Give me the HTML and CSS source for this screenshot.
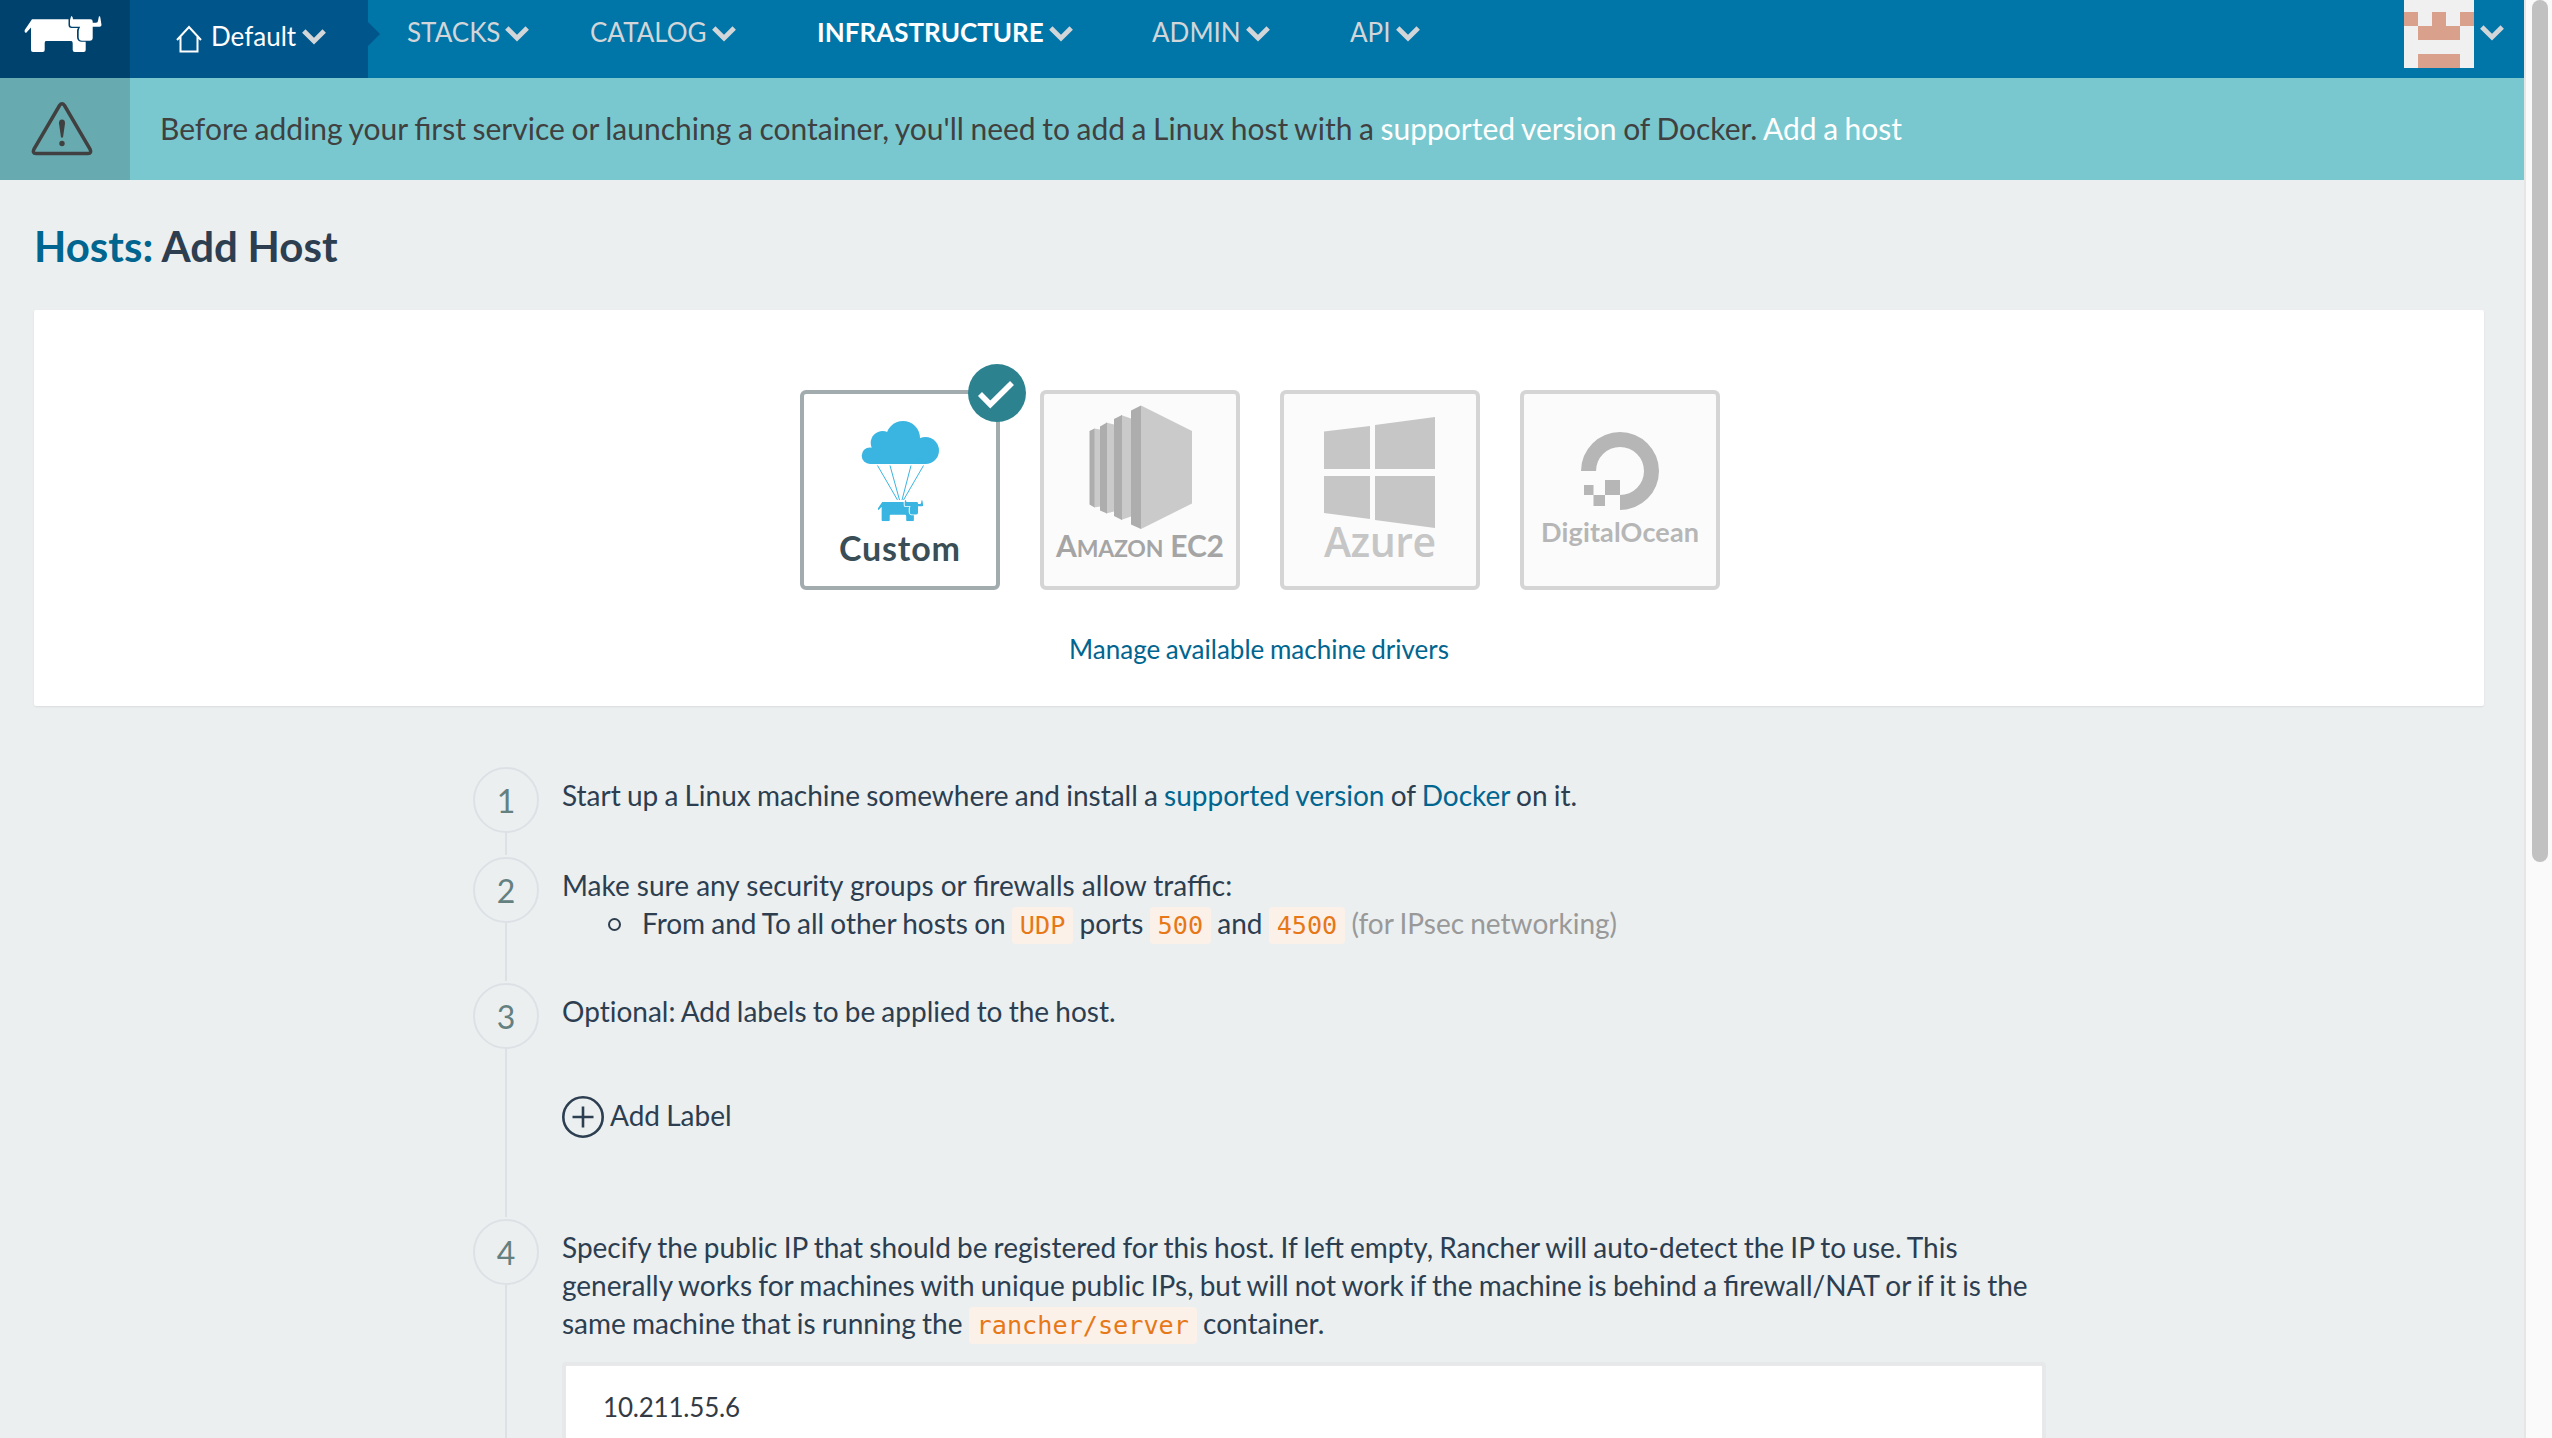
FILE: index.html
```html
<!DOCTYPE html>
<html lang="en">
<head>
<meta charset="utf-8">
<title>Add Host</title>
<link rel="stylesheet" href="styles.css">
</head>
<body>
<svg class="defs" width="0" height="0">
  <symbol id="chevron" viewBox="0 0 24 16"><path d="M1.800 2 12 12.200 22.200 2" fill="none" stroke="currentColor" stroke-width="4.800"/></symbol>
  <symbol id="cow" viewBox="0 0 78 36">
    <path d="M8 3.300H44.500V9q0 3 3 3H54q-1 1-1 3v6q0 4 4 4.700h4.700V34q0 2-2 2h-9q-2 0-2-2v-6q0-3-1.500-3H22q-1.300 0-1.300 2v7q0 2-2 2H9q-2 0-2-2V11.500L2 17Q0 16.500.7 14z" fill="currentColor"/>
    <path d="M47.200 0Q49 .3 49 3.300H66.500q2.200 0 2.200 2.200v1.200H72q2 0 2-2L75 0q1.500.3 1.500 2.500L77.500 9q0 1.700-2 1.700h-6.800v11q0 3-3 3H58q-3 0-3.300-3V15q0-2 1.500-4.300H48q-2 0-2-2V4z" fill="currentColor"/>
  </symbol>
</svg>
<div class="app">
  <div class="page">
    <header class="header">
      <a class="logo"><svg width="78" height="36"><use href="#cow"/></svg></a>
      <a class="env">
        <svg class="home" width="26" height="28" viewBox="0 0 26 28"><path d="M1 15 13 2l12 13M4.500 12v14.500h17V12" fill="none" stroke="currentColor" stroke-width="2"/></svg>
        <span>Default</span><svg class="chev" width="24" height="16"><use href="#chevron"/></svg>
      </a>
      <nav class="nav">
        <a class="nav-item stacks">STACKS<svg class="chev" width="24" height="16"><use href="#chevron"/></svg></a>
        <a class="nav-item catalog">CATALOG<svg class="chev" width="24" height="16"><use href="#chevron"/></svg></a>
        <a class="nav-item infra"><b>INFRASTRUCTURE</b><svg class="chev" width="24" height="16"><use href="#chevron"/></svg></a>
        <a class="nav-item admin">ADMIN<svg class="chev" width="24" height="16"><use href="#chevron"/></svg></a>
        <a class="nav-item api">API<svg class="chev" width="24" height="16"><use href="#chevron"/></svg></a>
      </nav>
      <a class="user">
        <svg width="70" height="68" viewBox="0 0 70 68" shape-rendering="crispEdges"><path d="M0 0h70v68H0z" fill="#f0f0f0"/><path d="M0 12h14v14H0zM28 12h14v14H28zM56 12h14v14H56zM14 26h42v14H14zM14 54h42v14H14z" fill="#d9a08c"/></svg>
        <svg class="chev" width="24" height="16"><use href="#chevron"/></svg>
      </a>
    </header>
    <section class="alert">
      <div class="alert-icon"><svg width="62" height="54" viewBox="0 0 62 54"><path d="M28.500 3.500q2.500-3.500 5 0L59 47q2 4.500-2 4.500H5q-4 0-2-4.500z" fill="none" stroke="#404040" stroke-width="3.500"/><path d="M31 17.500q3.200 0 3 4L32 35.500h-2L28 21.500q-.2-4 3-4z" fill="#404040"/><circle cx="31" cy="41.500" r="2.700" fill="#404040"/></svg></div>
      <p class="alert-text">Before adding your first service or launching a container, you'll need to add a Linux host with a <a>supported version</a> of Docker. <a>Add a host</a></p>
    </section>
    <main class="content">
      <h1 class="title"><a>Hosts:</a> Add Host</h1>
      <section class="panel">
        <div class="drivers">
          <div class="driver selected">
            <svg width="192" height="192" viewBox="0 0 192 192">
              <g fill="#3ab5e1">
                <circle cx="66" cy="61.700" r="8.300"/><circle cx="78.700" cy="49" r="12"/><circle cx="99" cy="44" r="17"/><circle cx="121.500" cy="56.500" r="13.500"/><path d="M66 70V55l13-8h34l9 10v13z"/>
              </g>
              <path d="M73.500 71.500 93.500 106M86 71.500 95.500 106M107 71.500 98 106M119.500 71.500 99.500 106" stroke="#3ab5e1" fill="none"/>
              <g color="#3ab5e1"><use href="#cow" x="73.500" y="106" width="46" height="21.200"/></g>
              <text class="label-custom" x="35" y="167" textLength="121">Custom</text>
            </svg>
            <svg class="check" width="58" height="58" viewBox="0 0 58 58"><circle cx="29" cy="29" r="29" fill="#2c838f"/><path d="M12 30 22.300 40.500 44 19" fill="none" stroke="#fff" stroke-width="5.600"/></svg>
          </div>
          <div class="driver">
            <svg width="192" height="192" viewBox="0 0 192 192">
              <path d="M50 34.500l6 1v77l-6 1zM62 28.500l8 2v87l-8 2zM77 21l10 3.500v98L77 126zM97 11.500 148 37v72.500L97 135z" fill="#cacaca"/>
              <path d="M45.500 37l5-2.500v79l-5-3zM56 32.500l7-4v91l-7-3zM70 25l8-4v105l-8-4zM87 16.500l10-5V135l-10-4.500z" fill="#adadad"/>
              <text class="label-ec2" x="12" y="163" textLength="168">A<tspan class="small-cap">MAZON</tspan> EC2</text>
            </svg>
          </div>
          <div class="driver">
            <svg width="192" height="192" viewBox="0 0 192 192">
              <path d="M40 37.500 86 32v43H40zM91 31l60-8v52H91zM40 82h46v43l-46-6zM91 82h60v52l-60-8z" fill="#c6c6c6"/>
              <text class="label-azure" x="40" y="163" textLength="112">Azure</text>
            </svg>
          </div>
          <div class="driver">
            <svg width="192" height="192" viewBox="0 0 192 192">
              <path d="M57 77a39 39 0 1 1 39 39v-15a24 24 0 1 0-24-24zM81 86h15v15H81zM69.500 101H81v11H69.500zM60 91h9.500v10H60z" fill="#b6b6b6"/>
              <text class="label-do" x="17" y="148" textLength="158">DigitalOcean</text>
            </svg>
          </div>
        </div>
        <a class="manage">Manage available machine drivers</a>
      </section>
      <ol class="steps">
        <li class="step s1"><span class="num">1</span><div class="body">Start up a Linux machine somewhere and install a <a>supported version</a> of <a>Docker</a> on it.</div></li>
        <li class="step s2"><span class="num">2</span><div class="body"><span class="wide">Make sure any security groups or firewalls allow traffic:</span>
          <div class="bullet"><i class="dot"></i><span>From and To all other hosts on <code>UDP</code> ports <code>500</code> and <code>4500</code> <span class="muted">(for IPsec networking)</span></span></div></div></li>
        <li class="step s3"><span class="num">3</span><div class="body">Optional: Add labels to be applied to the host.
          <a class="add"><svg width="42" height="42" viewBox="0 0 42 42"><circle cx="21" cy="21" r="19.700" fill="none" stroke="currentColor" stroke-width="2.600"/><path d="M21 10.500v21M10.500 21h21" stroke="currentColor" stroke-width="2.600"/></svg><span>Add Label</span></a></div></li>
        <li class="step s4"><span class="num">4</span><div class="body">Specify the public IP that should be registered for this host. If left empty, Rancher will auto-detect the IP to use. This<br>generally works for machines with unique public IPs, but will not work if the machine is behind a firewall/NAT or if it is the<br>same machine that is running the <code>rancher/server</code> container.
          <div class="input">10.211.55.6</div></div></li>
      </ol>
    </main>
  </div>
  <div class="scrollbar"><div class="thumb"></div></div>
</div>
</body>
</html>
```
FILE: styles.css
```css
* { box-sizing: border-box; }
body { margin: 0; font-family: Lato, "Liberation Sans", sans-serif; font-size: 28px; line-height: 38px; color: #2c3e50; background: #ebeff0; }
.defs { position: absolute; }
svg { display: block; flex: none; }
a { color: #00658f; text-decoration: none; }
.app { display: flex; height: 1438px; overflow: hidden; }
.page { width: 2524px; flex: none; }
.header { display: flex; height: 78px; background: #0075a8; color: #d3d6d8; }
.header a { color: inherit; }
.header .logo { width: 130px; background: #00426e; padding: 16px 0 0 24px; color: #fff; }
.header .env { position: relative; width: 238px; background: #00558b; color: #fff; display: flex; padding: 17px 0 0 46px; font-size: 26px; }
.env::after { content: ""; position: absolute; left: 238px; top: 22px; border: 12px solid transparent; border-left-color: #00558b; border-right: 0; }
.home { margin: 8px 9px 0 0; }
.env .chev { margin: 12px 0 0 6px; color: #d3d6d8; }
.nav { display: flex; flex: 1; padding-top: 13px; font-size: 26px; }
.nav-item { display: flex; }
.nav-item .chev { margin: 13px 0 0 5px; }
.nav b { color: #fff; }
.stacks { width: 183px; margin-left: 39px; }
.catalog { width: 227px; }
.infra { width: 335px; }
.admin { width: 198px; }
.user { display: flex; width: 120px; }
.user .chev { margin: 25px 0 0 6px; }
.alert { display: flex; height: 102px; background: #79c8cf; }
.alert-icon { width: 130px; background: #67aab0; padding: 24px 0 0 31px; }
.alert-text { margin: 0; padding: 31px 0 0 30px; font-size: 30px; word-spacing: -1.1px; color: #404040; white-space: nowrap; }
.alert-text a { color: #fff; }
.content { padding: 0 40px 0 34px; }
.title { margin: 0; padding-top: 41px; height: 130px; font-size: 42px; line-height: 50px; font-weight: 700; word-spacing: -.5px; }
.panel { height: 396px; background: #fff; border-radius: 2px; box-shadow: 0 1px 2px rgba(0,0,0,.08); display: flex; flex-direction: column; align-items: center; }
.drivers { display: flex; gap: 40px; padding: 80px 0 0 2px; }
.driver { position: relative; width: 200px; height: 200px; border: 4px solid #d5d5d5; border-radius: 6px; background: #fbfbfb; }
.driver.selected { border-color: #a2acaf; background: #fff; }
.check { position: absolute; left: 164px; top: -30px; }
text { font-family: Lato, sans-serif; font-weight: 700; }
.label-custom { font-size: 34px; fill: #3a4e57; }
.label-ec2 { font-size: 30px; fill: #a5a5a5; }
.small-cap { font-size: 23px; }
.label-azure { font-family: "Open Sans", sans-serif; font-weight: 600; font-size: 41px; fill: #c6c6c6; }
.label-do { font-size: 27px; fill: #b6b6b6; }
.manage { margin-top: 40px; font-size: 26px; word-spacing: -1px; }
.steps { list-style: none; margin: 0; padding: 60px 0 0 439px; }
.step { display: flex; position: relative; }
.step::before { content: ""; position: absolute; left: 32px; top: 67px; bottom: 1px; width: 2px; background: #dde1e6; }
.num { width: 66px; height: 66px; margin-top: 1px; flex: none; border: 2px solid #dde1e6; border-radius: 50%; text-align: center; font-size: 32px; line-height: 64px; color: #64807f; }
.body { padding: 10px 0 0 23px; white-space: nowrap; word-spacing: -1px; }
.wide { word-spacing: 0; }
.s1 { height: 90px; }
.s2 { height: 126px; }
.s3 { height: 236px; font-variant-ligatures: none; }
.s4 { height: 400px; }
.bullet { display: flex; padding-left: 46px; }
.dot { width: 13px; height: 13px; margin: 14px 21px 0 0; border: 2px solid #2c3e50; border-radius: 50%; }
code { font-family: "DejaVu Sans Mono", monospace; font-size: 25.2px; line-height: 30px; color: #e67817; background: #fcf1e9; padding: 4px 8px; border-radius: 4px; }
.muted { color: #999; }
.add { display: flex; color: #2c3e50; padding-top: 66px; gap: 6px; }
.input { width: 1484px; height: 88px; margin-top: 20px; border: 4px solid #e6e8ea; background: #fff; border-radius: 4px; padding: 22px 0 0 37px; font-size: 26px; letter-spacing: -.2px; color: #333a44; }
.scrollbar { width: 28px; border-left: 2px solid #e6e6e6; background: #fafafa; padding: 0 4px 0 6px; }
.thumb { height: 862px; background: #c1c1c1; border-radius: 8px; }
```
